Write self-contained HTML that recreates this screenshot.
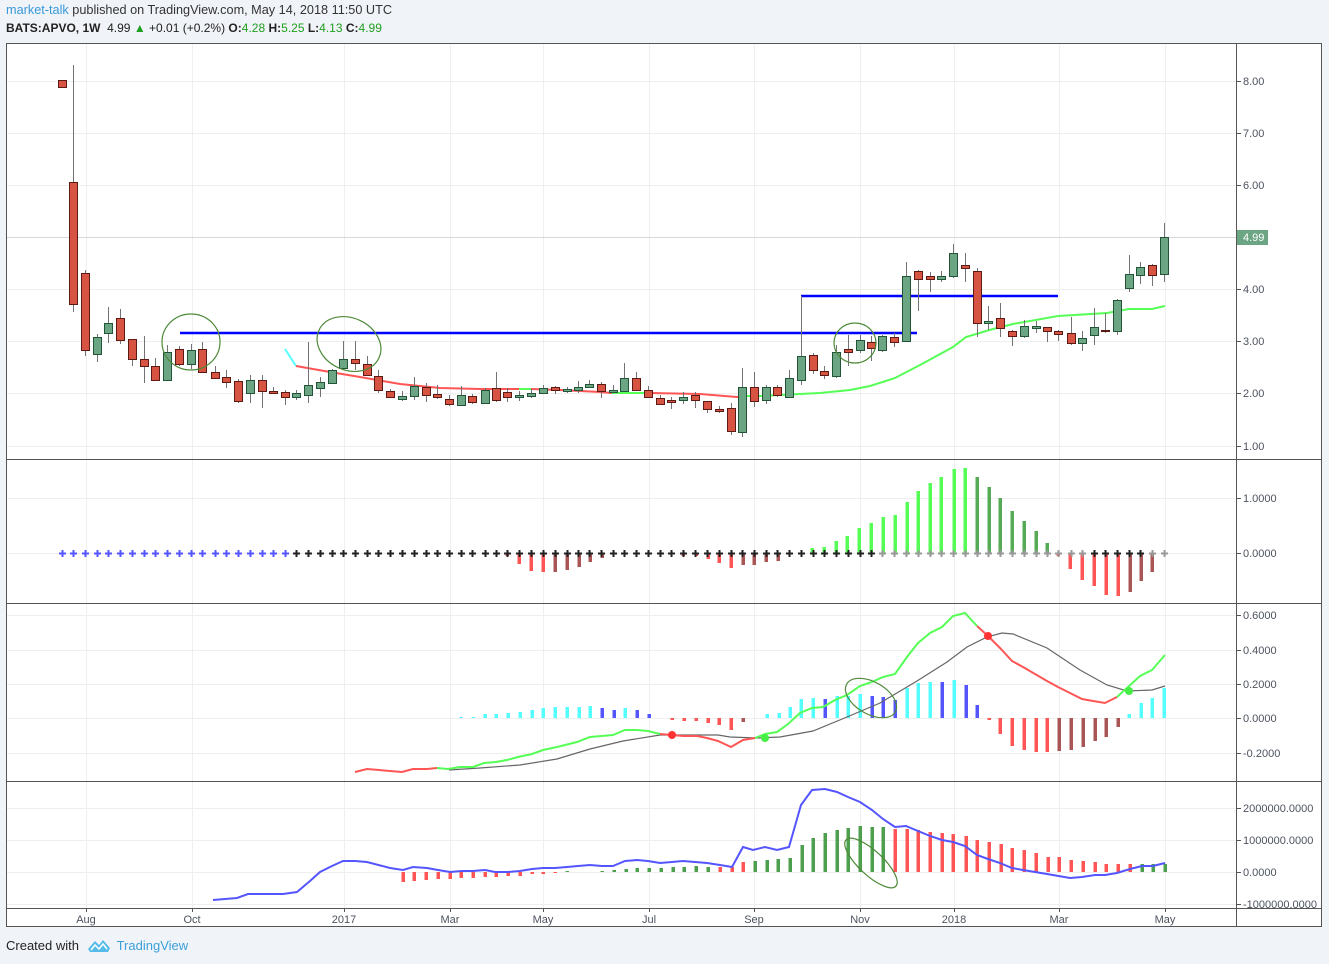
<!DOCTYPE html>
<html><head><meta charset="utf-8"><style>
body{margin:0;width:1329px;height:964px;background:#f0f3f7;font-family:"Liberation Sans",sans-serif;overflow:hidden;position:relative}
.h1{position:absolute;left:6px;top:3px;font-size:12.7px;color:#333}
.h2{position:absolute;left:6px;top:21px;font-size:12px;color:#222}
.b{font-weight:bold}.gr{color:#1f9f1f}
.ft{position:absolute;left:6px;top:938px;font-size:13px;color:#222}
svg{position:absolute;left:0;top:0}
</style></head><body>
<div class="h1"><span style="color:#3a9ad9">market-talk</span> published on TradingView.com, May 14, 2018 11:50 UTC</div>
<div class="h2"><span class="b">BATS:APVO, 1W</span>&nbsp; 4.99 <span class="gr">&#9650;</span> +0.01 (+0.2%) <span class="b">O:</span><span class="gr">4.28</span> <span class="b">H:</span><span class="gr">5.25</span> <span class="b">L:</span><span class="gr">4.13</span> <span class="b">C:</span><span class="gr">4.99</span></div>
<svg id="s" width="1329" height="964" xmlns="http://www.w3.org/2000/svg" font-family="Liberation Sans, sans-serif" font-size="11">
<rect x="6.5" y="43.5" width="1315" height="883" fill="#fff" stroke="#555"/>
<g id="grid" stroke="#efefef" stroke-width="1"></g>
<g id="plot"></g>
<g stroke="#555" stroke-width="1">
<line x1="1236.5" y1="43" x2="1236.5" y2="927"/>
<line x1="6" y1="459.5" x2="1322" y2="459.5"/>
<line x1="6" y1="603.5" x2="1322" y2="603.5"/>
<line x1="6" y1="781.5" x2="1322" y2="781.5"/>
<line x1="6" y1="908.5" x2="1322" y2="908.5"/>
</g>
<g id="ticks" stroke="#555"></g>
<g fill="#4c525e">
<text x="1243" y="85">8.00</text><text x="1243" y="137">7.00</text><text x="1243" y="189">6.00</text>
<text x="1243" y="293">4.00</text><text x="1243" y="345">3.00</text><text x="1243" y="397">2.00</text><text x="1243" y="450">1.00</text>
<text x="1243" y="502">1.0000</text><text x="1243" y="557">0.0000</text>
<text x="1243" y="619">0.6000</text><text x="1243" y="654">0.4000</text><text x="1243" y="688">0.2000</text><text x="1243" y="722">0.0000</text><text x="1243" y="757">-0.2000</text>
<text x="1243" y="812">2000000.0000</text><text x="1243" y="844">1000000.0000</text><text x="1243" y="876">0.0000</text><text x="1243" y="908">-1000000.0000</text>
</g>
<rect x="1237" y="230" width="31" height="15" fill="#6ba583"/>
<text x="1243" y="241" fill="#fff">4.99</text>
<g fill="#4c525e" text-anchor="middle">
<text x="86" y="923">Aug</text><text x="192" y="923">Oct</text><text x="344" y="923">2017</text><text x="450" y="923">Mar</text><text x="543" y="923">May</text><text x="649" y="923">Jul</text><text x="754" y="923">Sep</text><text x="860" y="923">Nov</text><text x="954" y="923">2018</text><text x="1059" y="923">Mar</text><text x="1165" y="923">May</text>
</g>
<g transform="translate(88,937)"><path d="M0 12 L7 4 L11 8 L15 3 L22 11 L20 15 L2 15 Z" fill="#56bbe8"/><path d="M3 13 L7 8 L11 12 L15 7 L19 12" fill="none" stroke="#fff" stroke-width="1.5"/></g>
</svg>
<div class="ft">Created with <span style="color:#3ba0d8;margin-left:34px">TradingView</span></div>
<script>
const NS="http://www.w3.org/2000/svg";
const plot=document.getElementById('plot'),grid=document.getElementById('grid'),ticks=document.getElementById('ticks');
function el(p,t,a){const e=document.createElementNS(NS,t);for(const k in a)e.setAttribute(k,a[k]);p.appendChild(e);return e;}
[86,192,344,450,543,649,754,860,954,1059,1165].forEach(x=>{el(grid,'line',{x1:x+.5,y1:44,x2:x+.5,y2:908});el(ticks,'line',{x1:x+.5,y1:908,x2:x+.5,y2:912});});
[81,133,185,237,289,341,393,446,498,553,615,650,684,718,753,808,840,872,904].forEach(y=>{el(grid,'line',{x1:7,y1:y+.5,x2:1236,y2:y+.5});el(ticks,'line',{x1:1237,y1:y+.5,x2:1241,y2:y+.5});});
el(plot,'line',{x1:7,y1:237.5,x2:1236,y2:237.5,stroke:'#d6d9dc'});
el(plot,'polyline',{points:"285,349 296,366",fill:'none',stroke:'#55ffff','stroke-width':2});
el(plot,'polyline',{points:"296,366 330,372 360,377 400,384 440,388 480,389 519,389",fill:'none',stroke:'#ff5555','stroke-width':2});
el(plot,'polyline',{points:"519,389 531,389",fill:'none',stroke:'#55ff55','stroke-width':2});
el(plot,'polyline',{points:"531,389 560,390 600,392 612,393",fill:'none',stroke:'#ff5555','stroke-width':2});
el(plot,'polyline',{points:"612,393 650,393",fill:'none',stroke:'#55ff55','stroke-width':2});
el(plot,'polyline',{points:"650,393 700,394 737,397 745,396",fill:'none',stroke:'#ff5555','stroke-width':2});
el(plot,'polyline',{points:"745,396 760,396 820,393 850,390 870,386 895,378 920,365 953,347 966,337 993,329 1013,324 1058,316 1107,313 1129,309 1152,309 1165,306",fill:'none',stroke:'#55ff55','stroke-width':2});
el(plot,'line',{x1:180,y1:333,x2:917,y2:333,stroke:'#0000ff','stroke-width':2.5});
el(plot,'line',{x1:801,y1:296,x2:1058,y2:296,stroke:'#0000ff','stroke-width':2.5});
const C=[[62,80,87,80,87,'r'],[73,182,304,65,312,'r'],[85,273,350,270,356,'r'],[97,337,354,334,362,'g'],[108,323,333,307,343,'g'],[120,318,340,309,344,'r'],[132,339,359,339,366,'r'],[144,359,366,336,383,'r'],[155,366,380,358,380,'r'],[167,352,380,345,380,'g'],[179,349,364,346,366,'r'],[191,350,364,344,369,'g'],[202,349,372,342,372,'r'],[215,372,378,366,378,'r'],[226,377,382,370,388,'r'],[238,381,401,379,403,'r'],[250,380,393,375,403,'g'],[262,380,391,375,408,'r'],[273,391,393,387,394,'r'],[285,392,397,390,405,'r'],[296,393,397,390,400,'g'],[308,385,395,342,403,'g'],[320,382,388,377,397,'g'],[332,370,383,369,383,'g'],[343,359,368,341,369,'g'],[355,359,363,341,370,'r'],[367,364,375,356,376,'r'],[378,376,390,370,393,'r'],[390,391,397,389,398,'r'],[402,396,399,391,401,'g'],[414,386,396,377,400,'g'],[426,387,395,383,402,'r'],[437,394,397,385,399,'r'],[449,399,404,395,406,'r'],[461,395,405,386,405,'g'],[472,396,402,394,404,'r'],[485,390,403,388,403,'g'],[496,388,400,372,402,'r'],[507,392,397,388,402,'r'],[519,395,397,391,401,'g'],[531,393,396,389,398,'g'],[543,388,393,385,394,'g'],[555,387,390,386,394,'r'],[567,389,391,387,393,'g'],[578,387,390,381,393,'g'],[589,384,387,380,388,'g'],[601,384,391,382,398,'r'],[613,390,392,385,393,'g'],[624,378,391,363,392,'g'],[636,378,390,372,390,'r'],[648,390,397,386,397,'r'],[660,398,404,395,405,'r'],[671,400,402,397,409,'r'],[683,397,400,392,404,'g'],[695,395,400,392,408,'r'],[707,401,409,401,413,'r'],[719,409,411,406,413,'r'],[731,408,431,403,435,'r'],[742,387,432,368,437,'g'],[754,387,401,372,407,'r'],[766,387,400,385,404,'g'],[777,387,395,385,397,'r'],[789,378,397,370,398,'g'],[801,356,380,296,385,'g'],[813,355,370,353,374,'r'],[824,371,375,366,379,'r'],[836,352,376,345,378,'g'],[848,349,352,335,366,'r'],[860,340,350,335,353,'g'],[871,342,348,336,361,'r'],[882,336,350,335,352,'g'],[894,337,342,333,347,'r'],[906,276,341,262,341,'g'],[918,271,279,270,311,'r'],[930,276,279,272,292,'r'],[941,276,279,271,282,'g'],[953,253,276,244,278,'g'],[965,265,268,253,282,'r'],[977,271,323,268,337,'r'],[988,321,323,306,330,'g'],[1000,318,328,303,337,'r'],[1012,331,336,330,346,'r'],[1024,326,336,320,338,'g'],[1036,326,328,321,333,'g'],[1047,327,331,327,342,'r'],[1058,331,334,330,341,'r'],[1071,333,343,317,345,'r'],[1082,338,343,331,351,'g'],[1094,327,335,308,345,'g'],[1105,330,331,313,333,'r'],[1117,300,331,299,335,'g'],[1129,274,288,255,292,'g'],[1140,267,275,262,284,'g'],[1152,265,275,264,286,'r'],[1164,237,274,223,282,'g']];
C.forEach(c=>{const[x,t,b,wt,wb,col]=c;
el(plot,'line',{x1:x+.5,y1:wt,x2:x+.5,y2:wb,stroke:'#737375'});
el(plot,'rect',{x:x-3.5,y:t+.5,width:8,height:Math.max(b-t,1),fill:col=='g'?'#6ba583':'#d75442',stroke:col=='g'?'#225437':'#5b1a13'});});
el(plot,'ellipse',{cx:191,cy:342,rx:29,ry:28,fill:'none',stroke:'#4f8a3a','stroke-width':1.2});
el(plot,'ellipse',{cx:349,cy:344,rx:33,ry:26,transform:'rotate(25 349 344)',fill:'none',stroke:'#4f8a3a','stroke-width':1.2});
el(plot,'ellipse',{cx:855,cy:343,rx:21,ry:20,fill:'none',stroke:'#4f8a3a','stroke-width':1.2});
const xs=C.map(c=>c[0]);
const B2=[[507,556,'#ff5555'],[519,564,'#ff5555'],[531,571,'#ff5555'],[543,572,'#ff5555'],[555,572,'#aa5555'],[567,570,'#aa5555'],[579,567,'#aa5555'],[590,562,'#aa5555'],[602,558,'#aa5555'],[683,556,'#ff5555'],[696,556,'#ff5555'],[708,559,'#ff5555'],[719,563,'#ff5555'],[731,568,'#ff5555'],[743,565,'#aa5555'],[754,565,'#aa5555'],[766,562,'#aa5555'],[778,561,'#aa5555'],[812,548,'#55ff55'],[824,547,'#55ff55'],[836,541,'#55ff55'],[847,536,'#55ff55'],[859,528,'#55ff55'],[871,523,'#55ff55'],[883,517,'#55ff55'],[895,515,'#55ff55'],[907,502,'#55ff55'],[918,491,'#55ff55'],[930,483,'#55ff55'],[941,477,'#55ff55'],[954,469,'#55ff55'],[965,468,'#55ff55'],[977,477,'#55aa55'],[989,487,'#55aa55'],[1000,498,'#55aa55'],[1012,511,'#55aa55'],[1024,521,'#55aa55'],[1036,531,'#55aa55'],[1047,543,'#55aa55'],[1058,556,'#ff5555'],[1070,569,'#ff5555'],[1082,580,'#ff5555'],[1094,586,'#ff5555'],[1106,595,'#ff5555'],[1118,596,'#ff5555'],[1130,592,'#aa5555'],[1141,581,'#aa5555'],[1152,572,'#aa5555']];
B2.forEach(b=>{const y0=Math.min(553,b[1]),y1=Math.max(553,b[1]);el(plot,'rect',{x:b[0]-1.5,y:y0,width:3.5,height:y1-y0,fill:b[2]});});
xs.forEach(x=>{let c=x<=285?'#5555ff':(x<=871?'#222':((x>=1094&&x<=1141)?'#222':'#999'));
el(plot,'path',{d:`M${x-3} 553.5h7M${x+.5} 550v7`,stroke:c,'stroke-width':2});});
const B3=[[461,717,'#55ffff'],[473,717,'#55ffff'],[485,714,'#55ffff'],[496,714,'#55ffff'],[508,713,'#55ffff'],[520,712,'#55ffff'],[532,710,'#55ffff'],[543,708,'#55ffff'],[555,707,'#55ffff'],[567,707,'#55ffff'],[579,707,'#55ffff'],[590,706,'#55ffff'],[602,708,'#5555ff'],[614,710,'#5555ff'],[625,708,'#55ffff'],[637,710,'#5555ff'],[649,714,'#5555ff'],[672,720,'#ff5555'],[684,721,'#ff5555'],[696,721,'#ff5555'],[708,723,'#ff5555'],[719,725,'#ff5555'],[731,730,'#ff5555'],[743,722,'#aa5555'],[767,714,'#55ffff'],[779,713,'#55ffff'],[790,707,'#55ffff'],[801,699,'#55ffff'],[813,698,'#55ffff'],[825,699,'#5555ff'],[837,696,'#55ffff'],[848,696,'#55ffff'],[860,694,'#55ffff'],[872,696,'#5555ff'],[883,697,'#5555ff'],[895,700,'#5555ff'],[907,688,'#55ffff'],[918,683,'#55ffff'],[930,682,'#55ffff'],[942,682,'#5555ff'],[954,680,'#55ffff'],[966,685,'#5555ff'],[977,705,'#5555ff'],[989,720,'#ff5555'],[1000,734,'#ff5555'],[1012,746,'#ff5555'],[1024,750,'#ff5555'],[1036,752,'#ff5555'],[1047,752,'#ff5555'],[1059,751,'#aa5555'],[1071,750,'#aa5555'],[1083,747,'#aa5555'],[1095,741,'#aa5555'],[1106,737,'#aa5555'],[1118,727,'#aa5555'],[1129,714,'#55ffff'],[1141,703,'#55ffff'],[1152,698,'#55ffff'],[1164,688,'#55ffff']];
B3.forEach(b=>{const y0=Math.min(718,b[1]),y1=Math.max(718,b[1]);el(plot,'rect',{x:b[0]-1.5,y:y0,width:3.5,height:Math.max(y1-y0,1),fill:b[2]});});
el(plot,'polyline',{points:"449,770 480,768 520,765 557,759 590,749 623,741 660,735 718,735 730,737 757,738 780,737 813,731 847,717 880,703 917,681 947,662 967,647 987,637 1002,633 1013,634 1047,648 1080,670 1107,685 1127,691 1152,690 1165,686",fill:'none',stroke:'#666','stroke-width':1.2});
const PL=(p,c)=>el(plot,'polyline',{points:p,fill:'none',stroke:c,'stroke-width':2});
PL("355,772 367,769 402,772 413,769 427,769 437,768","#ff5555");
PL("437,768 448,769 460,767 473,767 484,763 496,762 507,760 518,757 532,754 543,750 557,747 577,742 590,737 613,735 625,730 637,730 648,731 660,734","#55ff55");
PL("660,734 672,735 683,736 697,736 707,738 718,741 731,747 743,740 755,738","#ff5555");
PL("755,738 765,734 777,732 788,724 800,713 812,708 823,707 835,700 847,695 860,686 872,682 883,677 895,674 907,657 918,643 930,633 942,627 953,616 965,613 977,626","#55ff55");
PL("977,626 988,636 1000,648 1012,661 1023,667 1035,674 1047,681 1058,687 1070,693 1082,699 1093,701 1105,703 1117,697","#ff5555");
PL("1117,697 1128,687 1140,676 1152,670 1165,655","#55ff55");
[[672,735,'#ff3333'],[988,636,'#ff3333'],[765,738,'#44ee44'],[1129,691,'#44ee44']].forEach(d=>el(plot,'circle',{cx:d[0],cy:d[1],r:4,fill:d[2]}));
el(plot,'ellipse',{cx:871,cy:698,rx:28,ry:16,transform:'rotate(30 871 698)',fill:'none',stroke:'#4f8a3a','stroke-width':1.2});
const B4=[[403,882,'r'],[414,881,'r'],[426,880,'r'],[438,879,'r'],[450,879,'r'],[461,878,'r'],[473,878,'r'],[485,877,'r'],[496,877,'r'],[508,876,'r'],[520,876,'r'],[532,874,'r'],[543,874,'r'],[555,873,'r'],[567,871,'g'],[602,871,'g'],[614,870,'g'],[626,869,'g'],[637,868,'g'],[649,868,'g'],[661,868,'g'],[673,867,'g'],[684,867,'g'],[696,866,'g'],[708,867,'g'],[720,867,'r'],[732,867,'r'],[743,862,'r'],[755,861,'g'],[767,860,'g'],[778,859,'g'],[790,858,'g'],[802,845,'g'],[813,838,'g'],[825,833,'g'],[837,830,'g'],[848,828,'g'],[860,826,'g'],[872,827,'g'],[883,827,'g'],[895,829,'r'],[907,829,'r'],[918,830,'r'],[930,832,'r'],[942,833,'r'],[953,834,'r'],[966,836,'r'],[977,840,'r'],[989,842,'r'],[1001,844,'r'],[1012,848,'r'],[1024,850,'r'],[1036,853,'r'],[1048,857,'r'],[1059,857,'r'],[1071,860,'r'],[1083,861,'r'],[1095,862,'r'],[1106,864,'r'],[1118,864,'r'],[1130,864,'r'],[1142,864,'g'],[1153,864,'g'],[1165,864,'g']];
B4.forEach(b=>{const y0=Math.min(872,b[1]),y1=Math.max(872,b[1]);el(plot,'rect',{x:b[0]-1.5,y:y0,width:3.5,height:Math.max(y1-y0,1),fill:b[2]=='g'?'#4c9f4c':'#ff5555'});});
PL("213,900 237,898 248,894 283,894 297,892 310,881 320,872 332,866 343,861 355,861 367,862 390,868 403,870 413,867 427,868 438,870 450,872 462,871 473,871 485,870 495,872 508,872 520,871 532,869 543,868 555,868 567,867 578,866 590,865 602,866 613,866 625,861 637,860 648,861 660,863 672,862 683,861 695,862 707,863 720,865 732,867 743,847 753,850 765,847 777,850 789,847 801,805 812,790 825,789 837,792 848,797 860,802 872,810 883,819 895,827 906,826 918,831 930,836 942,840 953,842 965,846 977,855 988,859 1000,863 1012,868 1023,870 1047,874 1070,878 1082,877 1095,875 1105,875 1117,873 1130,869 1142,866 1153,866 1165,863","#5555ff");
el(plot,'ellipse',{cx:871,cy:863,rx:34,ry:12,transform:'rotate(43 871 863)',fill:'none',stroke:'#4f8a3a','stroke-width':1.2});
</script>
</body></html>
